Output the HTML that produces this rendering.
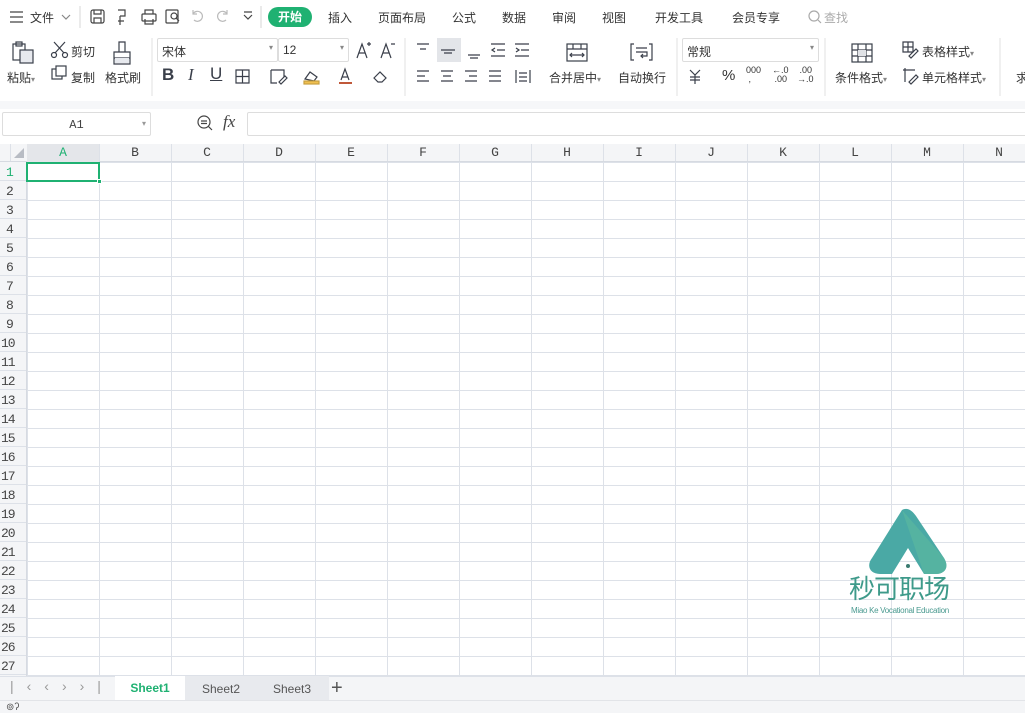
<!DOCTYPE html>
<html><head><meta charset="utf-8"><style>
*{margin:0;padding:0;box-sizing:border-box}
body{width:1025px;height:713px;overflow:hidden;background:#fff;font-family:"Liberation Sans","Noto Sans CJK SC",sans-serif;font-size:12px;color:#333;position:relative}
.a{position:absolute;white-space:nowrap}
svg{position:absolute;overflow:visible}
.m{font-family:"Liberation Mono","Noto Serif CJK SC",monospace;color:#444}
</style></head><body>
<div class="a" style="left:0;top:0;width:1025px;height:100px;background:#fff;box-shadow:0 2px 3px rgba(0,0,0,0.06)"></div>
<svg width="1025" height="100" style="left:0;top:0" fill="none" stroke="#444" stroke-width="1.2">
<path d="M10 12h13M10 17h13M10 22h13"/>
<path d="M62 15l4 4 4-4" stroke="#888"/>
<line x1="80" y1="6" x2="80" y2="28" stroke="#ddd"/>
<rect x="91" y="10" width="13" height="13" rx="2"/><path d="M94 10v4h7v-4M94 23v-5h7v5"/>
<path d="M118 10h7v6h-5M120 16v9M118 21h6"/>
<rect x="142" y="14" width="14" height="7" rx="1"/><path d="M145 14v-4h8v4M145 19v5h8v-5"/>
<rect x="166" y="10" width="12" height="13" rx="1"/><circle cx="174" cy="16" r="3"/><path d="M176 18l3 3"/>
<path d="M193 14a5 5 0 1 1 1 6M193 10v4h4" stroke="#bbb"/>
<path d="M227 14a5 5 0 1 0-1 6M227 10v4h-4" stroke="#bbb"/>
<path d="M244 15l4 4 4-4M244 12h8"/>
<line x1="261" y1="6" x2="261" y2="28" stroke="#ddd"/>
<circle cx="814" cy="16" r="5" stroke="#aaa"/><path d="M818 20l3 3" stroke="#aaa"/>
</svg>
<div class="a" style="left:30px;top:9px">文件</div>
<div class="a" style="left:268px;top:7px;width:44px;height:20px;border-radius:10px;background:#1fb172;color:#fff;text-align:center;line-height:20px;font-weight:bold">开始</div>
<div class="a" style="left:328px;top:9px">插入</div>
<div class="a" style="left:378px;top:9px">页面布局</div>
<div class="a" style="left:452px;top:9px">公式</div>
<div class="a" style="left:502px;top:9px">数据</div>
<div class="a" style="left:552px;top:9px">审阅</div>
<div class="a" style="left:602px;top:9px">视图</div>
<div class="a" style="left:655px;top:9px">开发工具</div>
<div class="a" style="left:732px;top:9px">会员专享</div>
<div class="a" style="left:824px;top:9px;color:#aaa">查找</div>
<svg width="1025" height="100" style="left:0;top:0" fill="none" stroke="#3a3f4a" stroke-width="1.2">
<rect x="13" y="44" width="12" height="16"/><rect x="20" y="50" width="13" height="13" fill="#e7e9ee"/><rect x="16" y="42" width="6" height="4"/>
<circle cx="54" cy="55" r="2.5"/><circle cx="65" cy="55" r="2.5"/><path d="M55 53l10-11M64 53l-10-11"/>
<rect x="52" y="69" width="10" height="10"/><rect x="56" y="66" width="10" height="10" fill="#fff"/>
<path d="M119 42h6v10h-6zM114 52h16v12h-16zM114 58h16" />
<rect x="115" y="58" width="14" height="5" fill="#e7e9ee" stroke="none"/>
<line x1="152" y1="38" x2="152" y2="96" stroke="#e5e5e5"/>
<line x1="405" y1="38" x2="405" y2="96" stroke="#e5e5e5"/>
<line x1="677" y1="38" x2="677" y2="96" stroke="#e5e5e5"/>
<line x1="825" y1="38" x2="825" y2="96" stroke="#e5e5e5"/>
<line x1="1000" y1="38" x2="1000" y2="96" stroke="#e5e5e5"/>
<path d="M357 58l5-14 5 14M359 53h6M367 44h4M369 42v4"/>
<path d="M381 58l5-14 5 14M383 53h6M391 44h4"/>
<path d="M236 70h13v13h-13zM242.5 70v13M236 76.5h13"/>
<path d="M271 70h13v7M271 70v13h6"/><path d="M279 82l6-6 2 2-6 6z"/>
<path d="M305 79l5-7 7 5-3 4z"/><rect x="304" y="81" width="15" height="3" fill="#f0c050" stroke="#c8a040"/>
<path d="M341 80l4-11 4 11M342 77h6"/><rect x="339" y="82" width="13" height="2" fill="#c0583a" stroke="none"/>
<path d="M374 78l6-6 6 6-4 4h-4z"/>
<path d="M417 44h12M420 49h6"/>
<rect x="437" y="38" width="24" height="24" fill="#e3e5e9" stroke="none"/>
<path d="M441 50h14M444 53h8"/>
<path d="M468 55h12M470 58h8"/>
<path d="M491 44h14M497 50h8M491 56h14M495 48l-3 2 3 2"/>
<path d="M515 44h14M521 50h8M515 56h14M516 48l3 2-3 2"/>
<path d="M417 71h12M417 76h8M417 81h12M441 71h12M443 76h8M441 81h12M465 71h12M469 76h8M465 81h12M489 71h12M489 76h12M489 81h12"/>
<path d="M516 70v13M530 70v13M519 73h8M519 77h8M519 81h8"/>
<rect x="567" y="44" width="20" height="17"/><path d="M567 49h20M570 55h14M572 53l-2 2 2 2M582 53l2 2-2 2M573 44v5M581 44v5"/>
<path d="M634 44h-3v16h3M649 44h3v16h-3M636 48h11M636 52h11v4h-6M643 54l-2 2 2 2"/>
<path d="M690 70l5 5 5-5M695 75v9M690 77h10M690 80h10"/>
<rect x="852" y="44" width="20" height="18"/><path d="M852 50h20M852 56h20M858 44v18M866 44v18"/><rect x="858" y="50" width="8" height="6" fill="#e0e2e6" stroke="none"/>
<path d="M903 42h10v10h-10zM903 47h10M908 42v10M909 56l7-7 2 2-7 7z"/>
<path d="M903 70h12M905 68v14M909 82l7-7 2 2-7 7z"/>
</svg>
<div class="a" style="left:7px;top:69px">粘贴<span style="font-size:8px;color:#888">▾</span></div>
<div class="a" style="left:71px;top:43px">剪切</div>
<div class="a" style="left:71px;top:69px">复制</div>
<div class="a" style="left:105px;top:69px">格式刷</div>
<div class="a" style="left:157px;top:38px;width:121px;height:24px;border:1px solid #ddd;border-radius:2px;padding:4px 4px">宋体<span style="position:absolute;right:4px;font-size:8px;color:#888">▾</span></div>
<div class="a" style="left:278px;top:38px;width:71px;height:24px;border:1px solid #ddd;border-radius:2px;padding:4px 4px">12<span style="position:absolute;right:4px;font-size:8px;color:#888">▾</span></div>
<div class="a" style="left:162px;top:65px;font-size:17px;font-weight:bold;color:#3a3f4a">B</div>
<div class="a" style="left:188px;top:65px;font-size:17px;font-style:italic;font-family:'Liberation Serif';color:#3a3f4a">I</div>
<div class="a" style="left:210px;top:64px;font-size:17px;text-decoration:underline;color:#3a3f4a">U</div>
<div class="a" style="left:549px;top:69px">合并居中<span style="font-size:8px;color:#888">▾</span></div>
<div class="a" style="left:618px;top:69px">自动换行</div>
<div class="a" style="left:682px;top:38px;width:137px;height:24px;border:1px solid #ddd;border-radius:2px;padding:4px 4px">常规<span style="position:absolute;right:4px;font-size:8px;color:#888">▾</span></div>
<div class="a" style="left:722px;top:67px;font-size:15px">%</div>
<div class="a" style="left:746px;top:66px;font-size:9px;line-height:9px">000<br>&nbsp;,</div>
<div class="a" style="left:772px;top:66px;font-size:9px;line-height:9px">←.0<br>&nbsp;.00</div>
<div class="a" style="left:797px;top:66px;font-size:9px;line-height:9px">&nbsp;.00<br>→.0</div>
<div class="a" style="left:835px;top:69px">条件格式<span style="font-size:8px;color:#888">▾</span></div>
<div class="a" style="left:922px;top:43px">表格样式<span style="font-size:8px;color:#888">▾</span></div>
<div class="a" style="left:922px;top:69px">单元格样式<span style="font-size:8px;color:#888">▾</span></div>
<div class="a" style="left:1016px;top:69px">求</div>
<div class="a" style="left:0;top:100px;width:1025px;height:44px;background:#fff"></div>
<div class="a" style="left:0;top:101px;width:1025px;height:8px;background:#f6f7f9"></div>
<div class="a" style="left:2px;top:112px;width:149px;height:24px;border:1px solid #ddd;border-radius:2px;text-align:center;line-height:22px"><span class="m">A1</span><span style="position:absolute;right:4px;font-size:8px;color:#999">▾</span></div>
<svg width="30" height="30" style="left:196px;top:114px" fill="none" stroke="#444" stroke-width="1.2"><circle cx="8" cy="8" r="6"/><path d="M12 12l4 4M5 7h6M5 9.5h6"/></svg>
<div class="a" style="left:223px;top:112px;font-size:17px;font-style:italic;font-family:'Liberation Serif';color:#444">fx</div>
<div class="a" style="left:247px;top:112px;width:790px;height:24px;border:1px solid #ddd;border-radius:2px"></div>
<div class="a" style="left:0;top:144px;width:1025px;height:532px;background-image:repeating-linear-gradient(to right,#dde1e8 0 1px,transparent 1px 72px);background-position:27px 0;"></div>
<div class="a" style="left:0;top:144px;width:1025px;height:532px;background-image:repeating-linear-gradient(to bottom,#dde1e8 0 1px,transparent 1px 19px);background-position:0 18px;"></div>
<div class="a" style="left:0;top:144px;width:1025px;height:18px;background:#f4f5f7;border-bottom:1px solid #d6dae1;background-image:repeating-linear-gradient(to right,#dde1e8 0 1px,transparent 1px 72px);background-position:27px 0"></div>
<div class="a" style="left:0;top:162px;width:27px;height:514px;background:#f4f5f7;border-right:1px solid #d6dae1;background-image:repeating-linear-gradient(to bottom,transparent 0 18px,#dde1e8 18px 19px)"></div>
<div class="a" style="left:27px;top:144px;width:72px;height:18px;background:#e4e6ea"></div>
<svg width="12" height="12" style="left:13px;top:147px"><path d="M11 1v10H1z" fill="#b8bcc4"/></svg>
<div id="cols"></div>
<div class="a" style="left:26px;top:162px;width:74px;height:20px;border:2px solid #1fb172"></div>
<div class="a" style="left:97px;top:179px;width:5px;height:5px;background:#1fb172;border:1px solid #fff"></div>
<script>
var L="ABCDEFGHIJKLMN",h="";
for(var i=0;i<14;i++)h+='<div class="a m" style="left:'+(27+72*i)+'px;top:146px;width:72px;text-align:center;font-size:13px;line-height:14px;'+(i==0?'color:#1fb172':'')+'">'+L[i]+'</div>';
for(var r=1;r<=27;r++)h+='<div class="a m" style="left:0;top:'+(163+19*(r-1))+'px;width:20px;text-align:left;padding-left:'+(r<10?6:1)+'px;font-size:13px;letter-spacing:-1px;line-height:19px;'+(r==1?'color:#1fb172':'')+'">'+r+'</div>';
document.getElementById('cols').innerHTML=h;
</script>
<svg width="90" height="70" style="left:862px;top:508px"><path d="M40 2C45 -1 50 2 54 8L82 50C88 60 82 66 74 66H62L46 40L30 66H18C8 66 4 58 10 50Z" fill="#4aa9a5"/><path d="M40 2L62 66H74C82 66 88 60 82 50Z" fill="#5ab8a0" opacity=".7"/><circle cx="46" cy="58" r="2" fill="#3a7a70"/></svg>
<div class="a" style="left:849px;top:574px;font-size:26px;color:#3e9a8a;letter-spacing:-1px;line-height:30px">秒可职场</div>
<div class="a" style="left:851px;top:606px;font-size:8px;color:#4a9a90;letter-spacing:-0.3px">Miao Ke Vocational Education</div>
<div class="a" style="left:0;top:676px;width:1025px;height:24px;background:#f4f5f7;border-top:1px solid #dde1e8"></div>
<div class="a" style="left:10px;top:678px;font-size:14px;color:#999;letter-spacing:13px">|‹‹››|</div>
<div class="a" style="left:115px;top:676px;width:70px;height:24px;background:#fff;color:#1fb172;font-weight:bold;text-align:center;line-height:24px">Sheet1</div>
<div class="a" style="left:185px;top:676px;width:144px;height:24px;background:#e8eaee"></div>
<div class="a" style="left:202px;top:682px;color:#555">Sheet2</div>
<div class="a" style="left:273px;top:682px;color:#555">Sheet3</div>
<div class="a" style="left:331px;top:676px;font-size:20px;color:#555;line-height:24px">+</div>
<div class="a" style="left:0;top:700px;width:1025px;height:13px;background:#f4f5f7;border-top:1px solid #e2e4e8"></div>
<div class="a" style="left:6px;top:702px;font-size:10px;color:#555">⊚ʔ</div>
</body></html>
